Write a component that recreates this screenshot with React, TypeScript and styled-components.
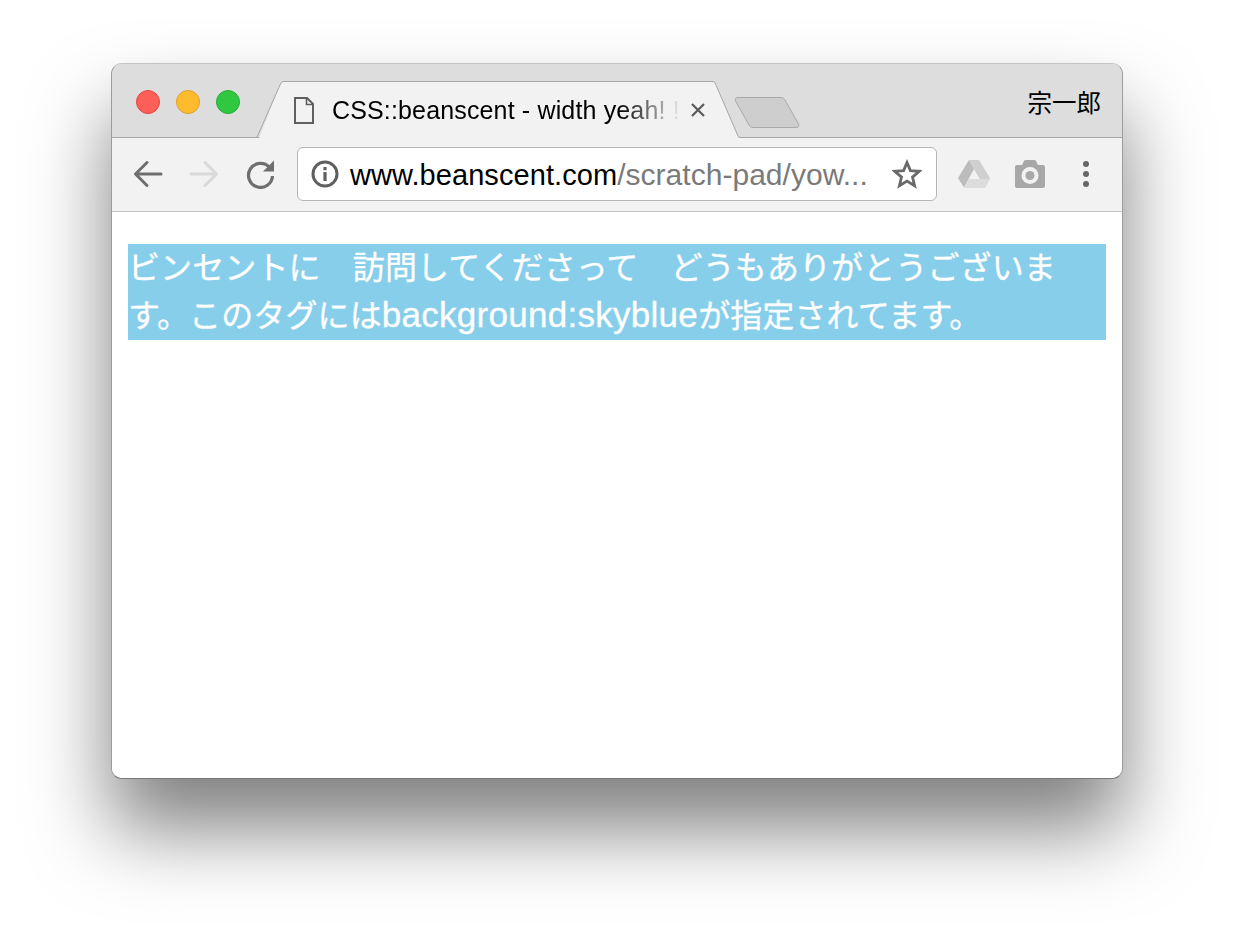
import React from "react";
import styled, { createGlobalStyle } from "styled-components";

const GlobalStyle = createGlobalStyle`
  html, body {
    margin: 0;
    padding: 0;
    background: #ffffff;
    font-family: "Liberation Sans", "Noto Sans CJK JP", sans-serif;
  }
`;

const Page = styled.div`
  width: 1234px;
  height: 938px;
  box-sizing: border-box;
  padding: 63px 111px 159px;
  overflow: hidden;
`;

const Window = styled.div`
  height: 716px;
  box-sizing: border-box;
  display: flex;
  flex-direction: column;
  border: 1px solid #9c9c9c;
  border-top-color: #c4c4c4;
  border-bottom-color: #777777;
  border-radius: 11px;
  background: #ffffff;
  overflow: hidden;
  box-shadow: 0 50px 80px rgba(0, 0, 0, 0.5);
`;

const TabBar = styled.div`
  height: 74px;
  flex: none;
  box-sizing: border-box;
  display: flex;
  align-items: flex-start;
  padding: 0 21px 0 24px;
  background: #dddddd;
  border-bottom: 1px solid #a6a6a6;
`;

const Lights = styled.div`
  display: flex;
  gap: 16px;
  margin-top: 26px;
`;

const Light = styled.span<{ $fill: string; $edge: string }>`
  width: 24px;
  height: 24px;
  box-sizing: border-box;
  border-radius: 50%;
  background: ${(p) => p.$fill};
  border: 1px solid ${(p) => p.$edge};
`;

const Tab = styled.div`
  display: flex;
  height: 57px;
  margin: 17px 0 -1px 16px;
  position: relative;
`;

const TabEdge = styled.svg`
  width: 27px;
  height: 57px;
  flex: none;
  display: block;
`;

const TabBody = styled.div`
  width: 430px;
  box-sizing: border-box;
  display: flex;
  align-items: center;
  padding: 0 5px 0 11px;
  background: #f2f2f2;
  border-top: 1px solid #a6a6a6;
`;

const TabTitle = styled.span`
  width: 350px;
  margin: 0 0 1px 18px;
  overflow: hidden;
  white-space: nowrap;
  font-size: 25px;
  letter-spacing: 0.15px;
  line-height: 54px;
  color: #000000;
  -webkit-mask-image: linear-gradient(to right, #000 82%, rgba(0, 0, 0, 0.12) 98%, transparent 100%);
  mask-image: linear-gradient(to right, #000 82%, rgba(0, 0, 0, 0.12) 98%, transparent 100%);
`;

const CloseIcon = styled.svg`
  margin-left: 8px;
  flex: none;
`;

const NewTab = styled.svg`
  margin: 32px 0 0 -6px;
  flex: none;
`;

const UserName = styled.span`
  margin: 20px 0 0 auto;
  font-family: "Noto Sans CJK JP", sans-serif;
  font-size: 24.5px;
  line-height: 36px;
  color: #000000;
`;

const Toolbar = styled.div`
  height: 74px;
  flex: none;
  box-sizing: border-box;
  display: flex;
  align-items: center;
  padding: 0 0 1px 21px;
  background: #f2f2f2;
  border-bottom: 1px solid #c4c4c4;
`;

const NavIcon = styled.svg<{ $gap?: number }>`
  flex: none;
  margin-left: ${(p) => p.$gap ?? 0}px;
`;

const AddressBar = styled.div`
  width: 640px;
  height: 54px;
  margin-left: 21px;
  box-sizing: border-box;
  display: flex;
  align-items: center;
  padding: 0 14px 0 13px;
  background: #ffffff;
  border: 1px solid #b5b5b5;
  border-radius: 6px;
`;

const Url = styled.span`
  flex: 1;
  margin: 2px 0 0 11px;
  white-space: nowrap;
  overflow: hidden;
  font-size: 29px;
  letter-spacing: 0.07px;
  line-height: 50px;
  color: #000000;
`;

const UrlPath = styled.span`
  color: #7a7a7a;
  font-size: 30px;
  letter-spacing: 0.03px;
  line-height: 1;
`;

const Content = styled.div`
  flex: 1;
  padding: 32px 16px 0;
  background: #ffffff;
`;

const Notice = styled.p`
  margin: 0;
  background: skyblue;
  color: #ffffff;
  font-family: "Liberation Sans", "Noto Sans CJK JP", sans-serif;
  font-size: 32px;
  letter-spacing: 0.12px;
  line-height: 48px;
  -webkit-text-stroke: 0.3px #ffffff;
`;

const Latin = styled.span`
  font-size: 35px;
  letter-spacing: 0.28px;
  line-height: 1;
`;

const App = () => {
  return (
    <>
      <GlobalStyle />
      <Page>
        <Window>
          <TabBar>
            <Lights>
              <Light $fill="#fc5f57" $edge="#e2463f" />
              <Light $fill="#fdbc2e" $edge="#e0a028" />
              <Light $fill="#2fc840" $edge="#2aac36" />
            </Lights>
            <Tab>
              <TabEdge viewBox="0 0 27 57">
                <path d="M0 57 L3 57 L24 4 Q25 1 27 1 L27 57 Z" fill="#f2f2f2" />
                <path d="M0 56.5 Q1 56.5 1.5 55 L24 4 Q25 .5 27 .5" fill="none" stroke="#a6a6a6" strokeWidth="1" />
              </TabEdge>
              <TabBody>
                <svg width="20" height="27" viewBox="0 0 20 27">
                  <path d="M1 1 H13 L19 7 V26 H1 Z" fill="none" stroke="#5f5f5f" strokeWidth="2" />
                  <path d="M12.5 1 V7.5 H19" fill="none" stroke="#5f5f5f" strokeWidth="1.6" />
                </svg>
                <TabTitle>CSS::beanscent - width yeah! !</TabTitle>
                <CloseIcon width="16" height="16" viewBox="0 0 16 16">
                  <path d="M2 2 L14 14 M14 2 L2 14" stroke="#5a5a5a" strokeWidth="2.2" />
                </CloseIcon>
              </TabBody>
              <TabEdge viewBox="0 0 27 57">
                <path d="M0 1 Q2 1 3 4 L25 55 Q26 57 27 57 L0 57 Z" fill="#f2f2f2" />
                <path d="M0 .5 Q2 .5 3 4 L25 55 Q25.5 56.5 27 56.5" fill="none" stroke="#a6a6a6" strokeWidth="1" />
              </TabEdge>
            </Tab>
            <NewTab width="66" height="33" viewBox="0 0 66 33">
              <path
                d="M4 1.5 H47 Q50 1.5 51 4 L64.5 28 Q65.5 31.5 62 31.5 H19 Q16 31.5 15 29 L1.5 5 Q.5 1.5 4 1.5 Z"
                fill="#cecece"
                stroke="#a9a9a9"
                strokeWidth="1"
              />
            </NewTab>
            <UserName>宗一郎</UserName>
          </TabBar>
          <Toolbar>
            <NavIcon width="30" height="28" viewBox="0 0 30 28">
              <path d="M28 14 H4 M14 2.5 L2.5 14 L14 25.5" fill="none" stroke="#6e6e6e" strokeWidth="3" strokeLinecap="round" strokeLinejoin="round" />
            </NavIcon>
            <NavIcon width="30" height="28" viewBox="0 0 30 28" $gap={26}>
              <path d="M2 14 H26 M16 2.5 L27.5 14 L16 25.5" fill="none" stroke="#d9d9d9" strokeWidth="3" strokeLinecap="round" strokeLinejoin="round" />
            </NavIcon>
            <NavIcon width="30" height="30" viewBox="0 0 30 30" $gap={27}>
              <path d="M23.3 8.2 A12 12 0 1 0 26.5 17" fill="none" stroke="#6e6e6e" strokeWidth="3.2" />
              <path d="M28 1.5 V12.5 H17 Z" fill="#6e6e6e" />
            </NavIcon>
            <AddressBar>
              <svg width="28" height="28" viewBox="0 0 28 28">
                <circle cx="14" cy="14" r="12" fill="none" stroke="#5f5f5f" strokeWidth="3" />
                <rect x="12.4" y="12" width="3.2" height="9" fill="#5f5f5f" />
                <rect x="12.4" y="7" width="3.2" height="3.2" fill="#5f5f5f" />
              </svg>
              <Url>
                www.beanscent.com<UrlPath>/scratch-pad/yow...</UrlPath>
              </Url>
              <svg width="30" height="30" viewBox="0 0 30 30">
                <path
                  d="M15 3.5 L18.4 11.6 L27.2 12.3 L20.5 18.1 L22.6 26.7 L15 22.1 L7.4 26.7 L9.5 18.1 L2.8 12.3 L11.6 11.6 Z"
                  fill="none"
                  stroke="#6a6a6a"
                  strokeWidth="2.8"
                  strokeLinejoin="miter"
                />
              </svg>
            </AddressBar>
            <NavIcon width="32" height="28" viewBox="0 0 32 28" $gap={21}>
              <path d="M11 0 H21 L32 18 L27 28 L16 9 Z" fill="#cfcfcf" />
              <path d="M11 0 L16 9 L6 27.5 L0 18 Z" fill="#bcbcbc" />
              <path d="M11 19 H32 L27 28 H6 Z" fill="#dcdcdc" />
            </NavIcon>
            <NavIcon width="30" height="28" viewBox="0 0 30 28" $gap={25}>
              <path
                d="M2 5 H7 L9 1 Q9.5 0 11 0 H19 Q20.5 0 21 1 L23 5 H28 Q30 5 30 7 V26 Q30 28 28 28 H2 Q0 28 0 26 V7 Q0 5 2 5 Z"
                fill="#a8a8a8"
              />
              <circle cx="15" cy="15.5" r="8.5" fill="#f2f2f2" />
              <circle cx="15" cy="15.5" r="4.5" fill="#a8a8a8" />
            </NavIcon>
            <NavIcon width="10" height="28" viewBox="0 0 10 28" $gap={36}>
              <circle cx="5" cy="4" r="3" fill="#666666" />
              <circle cx="5" cy="14" r="3" fill="#666666" />
              <circle cx="5" cy="24" r="3" fill="#666666" />
            </NavIcon>
          </Toolbar>
          <Content>
            <Notice>
              ビンセントに　訪問してくださって　どうもありがとうございます。このタグには<Latin>background:skyblue</Latin>が指定されてます。
            </Notice>
          </Content>
        </Window>
      </Page>
    </>
  );
};

export default App;
